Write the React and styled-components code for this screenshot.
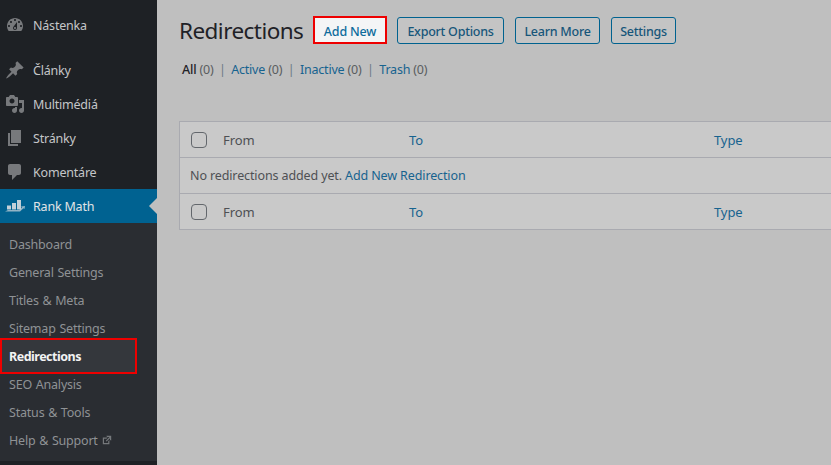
import React from 'react'
import styled, { createGlobalStyle } from 'styled-components'

const GlobalStyle = createGlobalStyle`
  html, body {
    margin: 0;
    padding: 0;
    height: 100%;
    overflow: hidden;
    font-family: "Noto Sans", "Open Sans", sans-serif;
    font-size: 12.5px;
    letter-spacing: -0.2px;
  }
  #root { height: 100%; }
`

const Dashicon = ({ d, size = 20 }) => (
  <svg width={size} height={size} viewBox="0 0 20 20" fill="currentColor">
    <path d={d} />
  </svg>
)

const icons = {
  gauge: 'M3.76 16h12.48c1.1-1.37 1.76-3.11 1.76-5 0-4.42-3.58-8-8-8s-8 3.58-8 8c0 1.89.66 3.63 1.76 5zM10 4c.55 0 1 .45 1 1s-.45 1-1 1-1-.45-1-1 .45-1 1-1zM6 6c.55 0 1 .45 1 1s-.45 1-1 1-1-.45-1-1 .45-1 1-1zm8 0c.55 0 1 .45 1 1s-.45 1-1 1-1-.45-1-1 .45-1 1-1zm-5.37 5.55L12 7v6c0 1.1-.9 2-2 2s-2-.9-2-2c0-.57.24-1.08.63-1.45zM4 10c.55 0 1 .45 1 1s-.45 1-1 1-1-.45-1-1 .45-1 1-1zm12 0c.55 0 1 .45 1 1s-.45 1-1 1-1-.45-1-1 .45-1 1-1zm-5 3c0-.55-.45-1-1-1s-1 .45-1 1 .45 1 1 1 1-.45 1-1z',
  pin: 'M10.44 3.02l1.82-1.82 6.36 6.35-1.83 1.82c-1.05-.68-2.48-.57-3.41.36l-.75.75c-.92.93-1.04 2.35-.35 3.41l-1.83 1.82-2.41-2.41-2.8 2.79c-.42.42-3.38 2.71-3.8 2.29s1.86-3.39 2.28-3.81l2.79-2.79L4.1 9.36l1.83-1.82c1.05.69 2.48.57 3.4-.36l.75-.75c.93-.92 1.05-2.35.36-3.41z',
  media: 'M13 11V4c0-.55-.45-1-1-1h-1.67L9 1H5L3.67 3H2c-.55 0-1 .45-1 1v7c0 .55.45 1 1 1h10c.55 0 1-.45 1-1zM7 4.5c1.38 0 2.5 1.12 2.5 2.5S8.38 9.5 7 9.5 4.5 8.38 4.5 7 5.62 4.5 7 4.5zM14 6h5v10.5c0 1.38-1.12 2.5-2.5 2.5S14 17.88 14 16.5s1.12-2.5 2.5-2.5c.17 0 .34.02.5.05V9h-3V6zm-4 8.05V13h2v3.5c0 1.38-1.12 2.5-2.5 2.5S7 17.88 7 16.5 8.12 14 9.5 14c.17 0 .34.02.5.05z',
  page: 'M6 15V2h10v13H6zm-1 1h8v2H3V5h2v11z',
  comment: 'M5 2h9c1.1 0 2 .9 2 2v7c0 1.1-.9 2-2 2h-2l-5 5v-5H5c-1.1 0-2-.9-2-2V4c0-1.1.9-2 2-2z',
  external: 'M9 3h8v8l-2-1V6.92l-5.6 5.59-1.41-1.42L14.08 5H10zm3 12v-3l2-2v7H3V6h8L9 8H5v7h7z',
}

const RankMathIcon = () => (
  <svg width="20" height="20" viewBox="0 0 20 20" fill="currentColor">
    <path d="M2 9.500h4v4H2zM7 7h4v6.500H7zM12 4h4v9.500h-4z" />
    <path d="M0 15.500L3 14h11l3-2.500-1-1 4-.5-.5 3-1-.8-3.500 3.300H3z" opacity="0.75" />
  </svg>
)

const menuItems = [
  { label: 'Články', icon: 'pin' },
  { label: 'Multimédiá', icon: 'media' },
  { label: 'Stránky', icon: 'page' },
  { label: 'Komentáre', icon: 'comment' },
]

const subItems = ['Dashboard', 'General Settings', 'Titles & Meta', 'Sitemap Settings', 'Redirections', 'SEO Analysis', 'Status & Tools']

const App = () => {
  return (
    <Page>
      <GlobalStyle />
      <Sidebar>
        <MenuItem $spaced>
          <MenuIcon><Dashicon d={icons.gauge} /></MenuIcon>
          Nástenka
        </MenuItem>
        {menuItems.map(({ label, icon }) => (
          <MenuItem key={label}>
            <MenuIcon><Dashicon d={icons[icon]} /></MenuIcon>
            {label}
          </MenuItem>
        ))}
        <MenuItem $active>
          <MenuIcon $active><RankMathIcon /></MenuIcon>
          Rank Math
        </MenuItem>
        <SubMenu>
          {subItems.map(label => (
            <SubItem key={label} $current={label === 'Redirections'}>{label}</SubItem>
          ))}
          <SubItem>
            Help &amp; Support
            <ExternalWrap><Dashicon d={icons.external} size={12} /></ExternalWrap>
          </SubItem>
        </SubMenu>
      </Sidebar>
      <Main>
        <Header>
          <Title>Redirections</Title>
          <AddNew>Add New</AddNew>
          <Button $width={107}>Export Options</Button>
          <Button $width={85}>Learn More</Button>
          <Button $width={65}>Settings</Button>
        </Header>
        <Filters>
          <strong>All</strong> <Count>(0)</Count><Sep>|</Sep>
          <a>Active</a> <Count>(0)</Count><Sep>|</Sep>
          <a>Inactive</a> <Count>(0)</Count><Sep>|</Sep>
          <a>Trash</a> <Count>(0)</Count>
        </Filters>
        <Table>
          <HeadRow>
            <Checkbox />
            <FromCell>From</FromCell>
            <ToCell>To</ToCell>
            <ToCell>Type</ToCell>
          </HeadRow>
          <EmptyRow>
            No redirections added yet.&nbsp;<a>Add New Redirection</a>
          </EmptyRow>
          <HeadRow>
            <Checkbox />
            <FromCell>From</FromCell>
            <ToCell>To</ToCell>
            <ToCell>Type</ToCell>
          </HeadRow>
        </Table>
      </Main>
    </Page>
  )
}

const Page = styled.div`
  display: flex;
  width: 831px;
  height: 465px;
  overflow: hidden;
  background: #bfbfbf;
`

const Sidebar = styled.nav`
  flex: 0 0 157px;
  box-sizing: border-box;
  padding-top: 8px;
  background: #1e2125;
  color: #c4c6c8;
`

const MenuItem = styled.div`
  position: relative;
  display: flex;
  align-items: center;
  height: 34px;
  margin-bottom: ${p => (p.$spaced ? '11px' : '0')};
  background: ${p => (p.$active ? '#006291' : 'transparent')};
  color: ${p => (p.$active ? '#e0e4e6' : '#c4c6c8')};

  ${p => p.$active && `
    &::after {
      content: '';
      position: absolute;
      right: 0;
      top: 9px;
      border: 8px solid transparent;
      border-right-color: #bfbfbf;
      border-left-width: 0;
    }
  `}
`

const MenuIcon = styled.span`
  display: flex;
  flex: 0 0 33px;
  padding-left: 5px;
  box-sizing: border-box;
  color: ${p => (p.$active ? '#c3d0d8' : '#77797c')};
`

const SubMenu = styled.div`
  padding: 7px 0;
  background: #2a2d32;
`

const SubItem = styled.div`
  position: relative;
  display: flex;
  align-items: center;
  height: 28px;
  padding-left: 9px;
  font-weight: ${p => (p.$current ? 700 : 400)};
  color: ${p => (p.$current ? '#f2f2f2' : '#8f9295')};
  letter-spacing: ${p => (p.$current ? '-0.5px' : '-0.2px')};
  word-spacing: 0.7px;

  ${p => p.$current && `
    &::after {
      content: '';
      position: absolute;
      left: 0;
      top: -4px;
      width: 133px;
      height: 32px;
      border: 2px solid #ee0000;
      background: rgba(255, 255, 255, 0.05);
    }
  `}
`

const ExternalWrap = styled.span`
  display: flex;
  margin-left: 3px;
  color: #75787b;
`

const Main = styled.main`
  flex: 1;
  min-width: 0;
  padding: 16px 0 0 22px;
`

const Header = styled.div`
  display: flex;
  align-items: flex-start;
  height: 28px;
`

const Title = styled.h1`
  width: 134px;
  margin: 0;
  padding-left: 1px;
  box-sizing: border-box;
  font-size: 22.5px;
  font-weight: 400;
  letter-spacing: -0.55px;
  line-height: 30px;
  color: #1f2227;
  text-indent: -1px;
`

const Button = styled.button`
  box-sizing: border-box;
  width: ${p => p.$width}px;
  height: 27px;
  margin: 1px 0 0 11px;
  padding: 2px 0 0;
  border: 1px solid #00628f;
  border-radius: 3px;
  background: #c4c4c4;
  color: #17567a;
  font-family: inherit;
  font-size: 12.5px;
  font-weight: 500;
  letter-spacing: -0.25px;
`

const AddNew = styled.button`
  box-sizing: border-box;
  width: 74px;
  height: 28px;
  margin-right: -1px;
  padding: 2px 0 0;
  border: 2px solid #ee0000;
  background: #f4f5f6;
  color: #0e6c9c;
  font-family: inherit;
  font-size: 12.5px;
  font-weight: 500;
  letter-spacing: -0.2px;
`

const Filters = styled.div`
  height: 20px;
  margin-top: 16px;
  padding-left: 3px;
  line-height: 20px;
  color: #1f2227;

  strong { font-weight: 500; }
  a { color: #17638f; }
`

const Count = styled.span`
  color: #5a5d60;
`

const Sep = styled.span`
  margin: 0 5.5px;
  color: #6c7a86;
`

const Table = styled.div`
  margin-top: 41px;
  border: 1px solid #a9aab0;
  border-right: none;
  background: #c9c9c9;
`

const HeadRow = styled.div`
  display: grid;
  grid-template-columns: 43px 186px 305px 1fr;
  align-items: center;
  height: 35px;
  font-size: 13px;
  letter-spacing: -0.1px;

  & + div { border-top: 1px solid #a9aab0; }
`

const Checkbox = styled.span`
  box-sizing: border-box;
  width: 16px;
  height: 16px;
  margin-left: 11px;
  border: 1px solid #63676c;
  border-radius: 4px;
`

const FromCell = styled.span`
  color: #4e5054;
`

const ToCell = styled.span`
  color: #17638f;
`

const EmptyRow = styled.div`
  display: flex;
  align-items: center;
  height: 36px;
  padding-left: 10px;
  box-sizing: border-box;
  color: #4e5054;
  letter-spacing: -0.12px;

  & + div { border-top: 1px solid #a9aab0; }
  a { color: #17638f; }
`

export default App
